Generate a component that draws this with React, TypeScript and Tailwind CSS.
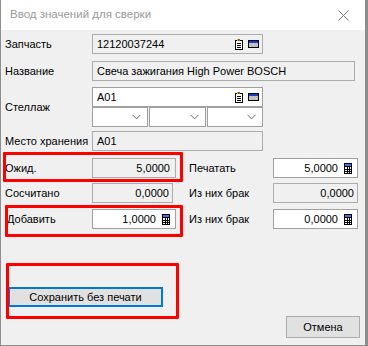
import React from "react";

const DocIcon = () => (
  <svg width="8" height="11" viewBox="0 0 8 11" shapeRendering="crispEdges">
    <rect x="0.5" y="1.5" width="7" height="9" fill="#fff" stroke="#000" />
    <rect x="2" y="0" width="1" height="2" fill="#e8c000" />
    <rect x="3" y="0" width="1" height="2" fill="#e02020" />
    <rect x="4" y="0" width="1" height="2" fill="#20a020" />
    <rect x="2" y="4" width="4" height="1" fill="#000" />
    <rect x="2" y="6" width="4" height="1" fill="#000" />
    <rect x="2" y="8" width="4" height="1" fill="#000" />
  </svg>
);

const WinIcon = () => (
  <svg width="11" height="8" viewBox="0 0 11 8" shapeRendering="crispEdges">
    <rect x="0.5" y="0.5" width="10" height="7" fill="#c0c0c0" stroke="#000" />
    <rect x="1" y="1" width="9" height="2" fill="#1040d0" />
  </svg>
);

const CalcIcon = () => (
  <svg width="8" height="11" viewBox="0 0 8 11" shapeRendering="crispEdges">
    <rect x="0" y="0" width="8" height="11" fill="#000" />
    <rect x="1" y="1" width="6" height="2" fill="#3a78e8" />
    <rect x="1" y="4" width="6" height="6" fill="#fff" />
    <rect x="3" y="4" width="1" height="6" fill="#000" />
    <rect x="5" y="4" width="1" height="6" fill="#000" />
    <rect x="1" y="6" width="6" height="1" fill="#000" />
    <rect x="1" y="8" width="6" height="1" fill="#000" />
  </svg>
);

const Chevron = () => (
  <svg width="9" height="6" viewBox="0 0 9 6">
    <path d="M0.5 0.8 L4.5 4.8 L8.5 0.8" fill="none" stroke="#666" strokeWidth="1" />
  </svg>
);

export default function App() {
  return (
    <div className="relative w-[368px] h-[346px] overflow-hidden bg-[#f0f0f0] border-r-[3px] border-b border-l border-[#8e8e8e] font-['Liberation_Sans',sans-serif] text-[11px] text-black leading-none whitespace-nowrap">
      <div className="h-[30px] bg-white flex items-center justify-between pl-[9px] pr-[16px] text-[#9a9a9a] text-[11.5px]">
        <span>Ввод значений для сверки</span>
        <svg width="11" height="11" viewBox="0 0 11 11">
          <path d="M0.5 0.5 L10.5 10.5 M10.5 0.5 L0.5 10.5" stroke="#777" strokeWidth="1" />
        </svg>
      </div>

      <div className="flex flex-col">
        <div className="flex items-center mt-[4px] h-[20px]">
          <div className="w-[91px] pl-[4px]">Запчасть</div>
          <div className="w-[171px] h-[20px] border border-[#acacac] bg-[#f0f0f0] flex items-center pl-[4px] pr-[3px]">
            <span className="flex-1">12120037244</span>
            <span className="flex items-center gap-[5px]">
              <DocIcon />
              <WinIcon />
            </span>
          </div>
        </div>

        <div className="flex items-center mt-[7px] h-[20px]">
          <div className="w-[91px] pl-[4px]">Название</div>
          <div className="w-[263px] h-[20px] border border-[#acacac] bg-[#f0f0f0] flex items-center pl-[4px]">
            Свеча зажигания High Power BOSCH
          </div>
        </div>

        <div className="flex items-center mt-[6px]">
          <div className="w-[91px] pl-[4px]">Стеллаж</div>
          <div className="flex flex-col w-[171px]">
            <div className="h-[20px] border border-[#a0a0a0] bg-white flex items-center pl-[4px] pr-[3px]">
              <span className="flex-1">A01</span>
              <span className="flex items-center gap-[5px]">
                <DocIcon />
                <WinIcon />
              </span>
            </div>
            <div className="flex h-[20px] gap-[1px] bg-[#f0f0f0]">
              <div className="w-[56px] border border-[#a0a0a0] bg-white flex items-center justify-end pr-[6px]">
                <Chevron />
              </div>
              <div className="w-[57px] border border-[#a0a0a0] bg-white flex items-center justify-end pr-[6px]">
                <Chevron />
              </div>
              <div className="flex-1 border border-[#a0a0a0] bg-white flex items-center justify-end pr-[6px]">
                <Chevron />
              </div>
            </div>
          </div>
        </div>

        <div className="flex items-center mt-[4px] h-[20px]">
          <div className="w-[91px] pl-[4px]">Место хранения</div>
          <div className="w-[171px] h-[20px] border border-[#acacac] bg-[#f0f0f0] flex items-center pl-[4px]">
            A01
          </div>
        </div>

        <div className="flex items-center mt-[7px] h-[20px]">
          <div className="w-[91px] pl-[4px]">Ожид.</div>
          <div className="w-[84px] h-[20px] border border-[#acacac] bg-[#f0f0f0] flex items-center justify-end pr-[5px]">
            5,0000
          </div>
          <div className="w-[97px] pl-[13px]">Печатать</div>
          <div className="w-[85px] h-[20px] border border-[#a0a0a0] bg-white flex items-center justify-end pr-[5px] gap-[6px]">
            <span>5,0000</span>
            <CalcIcon />
          </div>
        </div>

        <div className="flex items-center mt-[5px] h-[20px]">
          <div className="w-[91px] pl-[4px]">Сосчитано</div>
          <div className="w-[81px] h-[20px] border border-[#acacac] bg-[#f0f0f0] flex items-center justify-end pr-[3px]">
            0,0000
          </div>
          <div className="w-[100px] pl-[16px]">Из них брак</div>
          <div className="w-[85px] h-[20px] border border-[#acacac] bg-[#f0f0f0] flex items-center justify-end pr-[3px]">
            0,0000
          </div>
        </div>

        <div className="flex items-center mt-[6px] h-[20px]">
          <div className="w-[91px] pl-[6px]">Добавить</div>
          <div className="w-[84px] h-[20px] border border-[#a0a0a0] bg-white flex items-center justify-end pr-[5px] gap-[6px]">
            <span>1,0000</span>
            <CalcIcon />
          </div>
          <div className="w-[97px] pl-[13px]">Из них брак</div>
          <div className="w-[85px] h-[20px] border border-[#a0a0a0] bg-white flex items-center justify-end pr-[5px] gap-[6px]">
            <span>0,0000</span>
            <CalcIcon />
          </div>
        </div>

        <div className="mt-[58px] ml-[7px] w-[155px] h-[20px] border-2 border-[#0078d7] bg-[#e1e1e1] flex items-center justify-center">
          Сохранить без печати
        </div>

        <div className="flex justify-end mt-[9px] pr-[5px]">
          <div className="w-[74px] h-[22px] border border-[#adadad] bg-[#e1e1e1] flex items-center justify-center">
            Отмена
          </div>
        </div>
      </div>

      <div className="absolute left-[2px] top-[152px] w-[180px] h-[30px] border-[3px] border-[#ff0000] rounded-[1px]" />
      <div className="absolute left-[4px] top-[205px] w-[178px] h-[32px] border-[3px] border-[#ff0000] rounded-[1px]" />
      <div className="absolute left-[5px] top-[263px] w-[173px] h-[56px] border-[3px] border-[#ff0000] rounded-[1px]" />
    </div>
  );
}
